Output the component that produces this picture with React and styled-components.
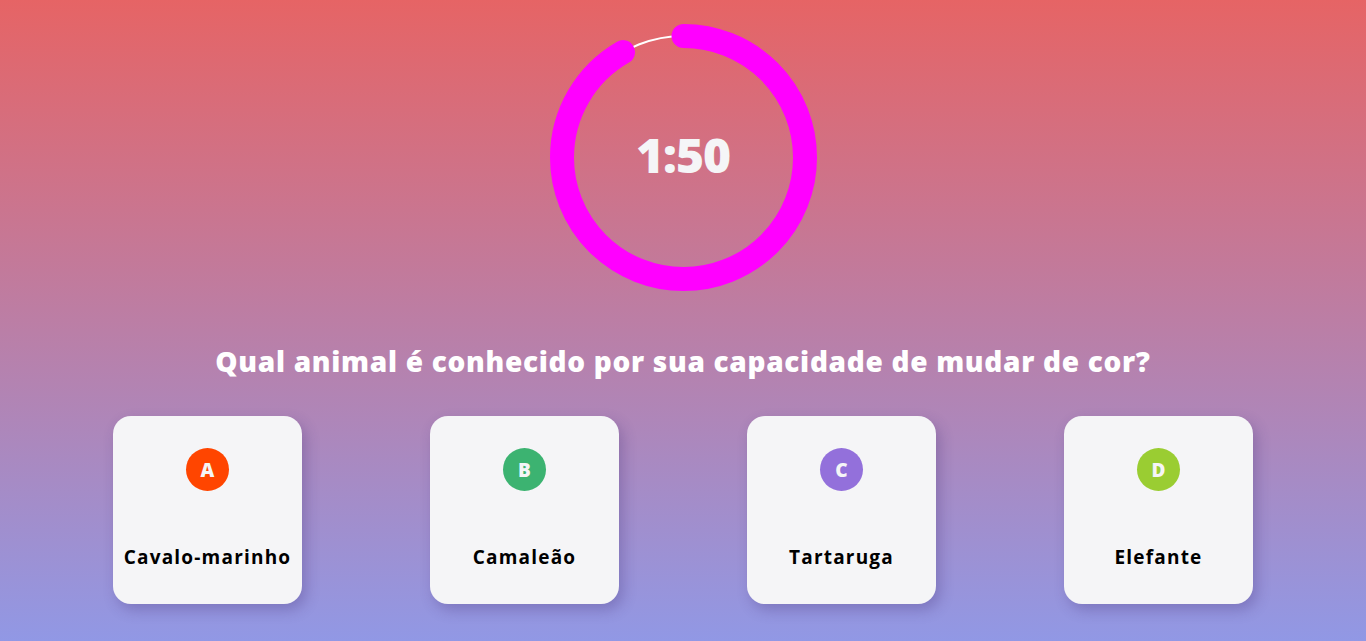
import React from "react";
import styled, { createGlobalStyle } from "styled-components";

const Global = createGlobalStyle`
  html, body { margin: 0; padding: 0; }
  body {
    min-height: 100vh;
    background: linear-gradient(#e66465, #9198e5);
    font-family: "Open Sans", "Noto Sans", sans-serif;
  }
`;

const Page = styled.main`
  min-height: 100vh;
  box-sizing: border-box;
  display: flex;
  flex-direction: column;
  align-items: center;
  padding-top: 24px;
`;

const TimerWrap = styled.div`
  position: relative;
  width: 267px;
  height: 267px;
  display: flex;
  align-items: center;
  justify-content: center;
`;

const Ring = styled.svg`
  position: absolute;
  inset: 0;
`;

const TimeText = styled.span`
  position: relative;
  top: -3px;
  color: #f5f5f7;
  font-size: 48px;
  font-weight: 800;
  letter-spacing: -1px;
`;

const Question = styled.h1`
  margin: 50px 0 0;
  color: #ffffff;
  font-size: 28px;
  line-height: 40px;
  font-weight: 800;
  letter-spacing: 0.7px;
  text-align: center;
`;

const Options = styled.div`
  margin-top: 35px;
  display: grid;
  grid-template-columns: repeat(4, 189px);
  column-gap: 128px;
`;

const Card = styled.button`
  width: 189px;
  height: 188px;
  border: none;
  border-radius: 18px;
  background: #f5f5f7;
  box-shadow: 4px 6px 14px rgba(60, 40, 110, 0.28);
  display: flex;
  flex-direction: column;
  align-items: center;
  padding: 32px 0 0;
  box-sizing: border-box;
  font-family: inherit;
  cursor: pointer;
`;

const Badge = styled.span`
  width: 43px;
  height: 43px;
  border-radius: 50%;
  background: ${(p) => p.$color};
  color: #f5f5f7;
  display: flex;
  align-items: center;
  justify-content: center;
  font-size: 19px;
  font-weight: 800;
`;

const Label = styled.span`
  margin-top: 52px;
  color: #000;
  font-size: 19px;
  font-weight: 700;
  letter-spacing: 1.2px;
  line-height: 28px;
  white-space: nowrap;
`;

const R = 121.5;
const C = 2 * Math.PI * R;
const progress = 110 / 120;

const options = [
  { letter: "A", text: "Cavalo-marinho", color: "#ff4500" },
  { letter: "B", text: "Camaleão", color: "#3cb371" },
  { letter: "C", text: "Tartaruga", color: "#9370db" },
  { letter: "D", text: "Elefante", color: "#9acd32" },
];

export default function App() {
  return (
    <>
      <Global />
      <Page>
        <TimerWrap>
          <Ring width="267" height="267" viewBox="0 0 267 267">
            <circle cx="133.5" cy="133.5" r={R} fill="none" stroke="#ffffff" strokeWidth="2" />
            <circle
              cx="133.5"
              cy="133.5"
              r={R}
              fill="none"
              stroke="#ff00ff"
              strokeWidth="24"
              strokeLinecap="round"
              strokeDasharray={`${C * progress} ${C}`}
              transform="rotate(-90 133.5 133.5)"
            />
          </Ring>
          <TimeText>1:50</TimeText>
        </TimerWrap>
        <Question>Qual animal é conhecido por sua capacidade de mudar de cor?</Question>
        <Options>
          {options.map((o) => (
            <Card key={o.letter}>
              <Badge $color={o.color}>{o.letter}</Badge>
              <Label>{o.text}</Label>
            </Card>
          ))}
        </Options>
      </Page>
    </>
  );
}
